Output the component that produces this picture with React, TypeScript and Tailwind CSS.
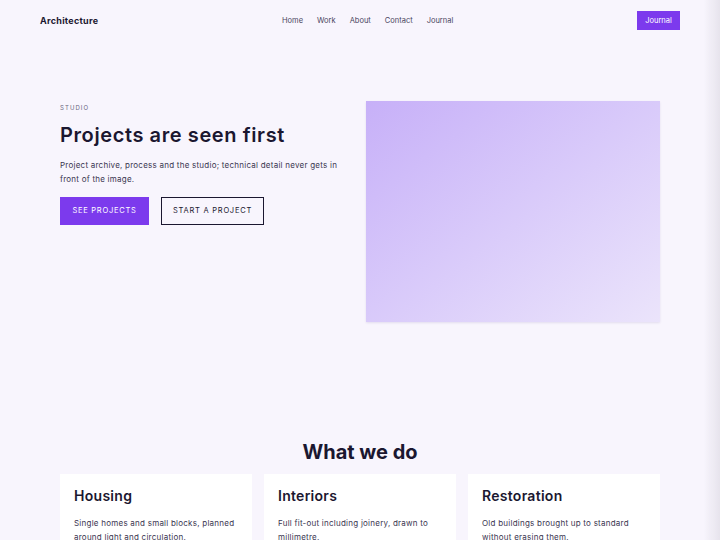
const services = [
  { title: 'Housing', text: 'Single homes and small blocks, planned around light and circulation.' },
  { title: 'Interiors', text: 'Full fit-out including joinery, drawn to millimetre.' },
  { title: 'Restoration', text: 'Old buildings brought up to standard without erasing them.' },
];

const links = ['Home', 'Work', 'About', 'Contact', 'Journal'];

export default function App() {
  return (
    <div className="relative min-h-screen bg-[#f8f5fd] text-[#1b1730] font-['Inter',sans-serif]">
      {/* Top bar */}
      <header className="flex items-center justify-between px-10 h-[41px]">
        <span className="text-[9px] font-bold tracking-[0.03em]">Architecture</span>
        <nav className="flex items-center gap-[14px] text-[7.5px] text-[#4a4560]">
          {links.map((l) => (
            <a key={l} href="#">{l}</a>
          ))}
        </nav>
        <button className="h-[19px] w-[43px] bg-[#7c3aed] text-white text-[7.5px]">Journal</button>
      </header>

      {/* Hero */}
      <section className="grid grid-cols-[1fr_294px] gap-5 px-[60px] pt-[60px]">
        <div className="pt-[2px]">
          <p className="text-[6px] tracking-[0.18em] text-[#6b6680]">STUDIO</p>
          <h1 className="mt-[9px] text-[20px] leading-[28px] font-semibold tracking-[0.03em]">Projects are seen first</h1>
          <p className="mt-[9px] text-[8px] leading-[14px] tracking-[0.03em] text-[#3a3550]">
            Project archive, process and the studio; technical detail never gets in front of the image.
          </p>
          <div className="mt-[11px] flex gap-3">
            <button className="h-[28px] w-[89px] bg-[#7c3aed] text-white text-[7.5px] tracking-[0.1em]">SEE PROJECTS</button>
            <button className="h-[28px] w-[103px] border border-[#1b1730] text-[7.5px] tracking-[0.1em]">START A PROJECT</button>
          </div>
        </div>
        <div className="h-[221px] bg-gradient-to-br from-[#c7b0f8] to-[#ebe4fb] shadow-[0_1px_2px_rgba(80,60,140,0.12)]" />
      </section>

      {/* Services */}
      <section className="px-[60px] pt-[116px] pb-10">
        <h2 className="text-center text-[20px] leading-[28px] font-bold">What we do</h2>
        <div className="mt-[8px] grid grid-cols-3 gap-3">
          {services.map((s) => (
            <div key={s.title} className="bg-white px-[14px] pt-[12px] pb-4">
              <h3 className="text-[14px] leading-[20px] font-semibold tracking-[0.02em]">{s.title}</h3>
              <p className="mt-[10px] text-[8px] leading-[14px] tracking-[0.03em] text-[#3a3550]">{s.text}</p>
            </div>
          ))}
        </div>
      </section>

      {/* scroll edge shade */}
      <div className="pointer-events-none fixed right-0 top-0 h-full w-[16px] bg-gradient-to-r from-transparent to-[#e6e3ec]" />
    </div>
  );
}
